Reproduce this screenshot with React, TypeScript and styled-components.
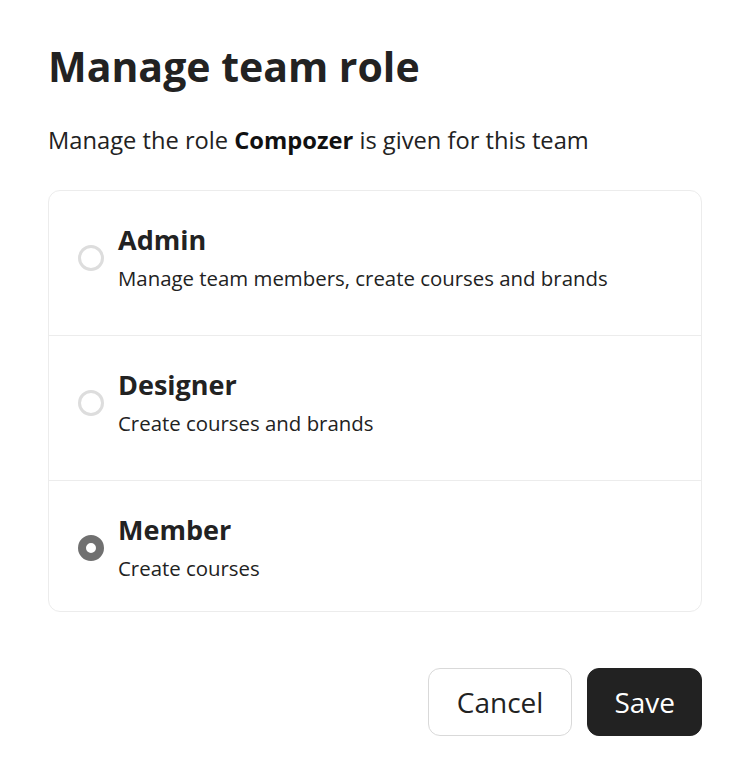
import * as React from 'react';
import styled, { createGlobalStyle } from 'styled-components';

const GlobalStyle = createGlobalStyle`
    body {
        margin: 0;
        background: #ffffff;
        font-family: "Open Sans", "Liberation Sans", sans-serif;
        color: #222222;
    }
`

const Dialog = styled.div`
    padding: 38px 44px 0 48px;
    display: flex;
    flex-direction: column;
`

const Title = styled.h1`
    margin: 0;
    font-size: 41px;
    font-weight: 700;
    line-height: 56px;
    color: #222;
`

const Subtitle = styled.p`
    margin: 30px 0 0;
    font-size: 23.7px;
    line-height: 32px;
    color: #222;
    b {
        font-weight: 700;
        color: #111;
    }
`

const Options = styled.div`
    margin-top: 34px;
    border: 1px solid #ececec;
    border-radius: 12px;
    display: flex;
    flex-direction: column;
`

const Option = styled.label<{ $last?: boolean }>`
    display: flex;
    align-items: center;
    gap: 14px;
    padding: ${p => (p.$last ? '32px 28px 28px' : '32px 28px 42px')};
    border-bottom: ${p => (p.$last ? 'none' : '1px solid #ececec')};
    cursor: pointer;
`

const Radio = styled.span<{ $checked?: boolean }>`
    width: 26px;
    height: 26px;
    box-sizing: border-box;
    border-radius: 50%;
    flex-shrink: 0;
    margin-left: 1px;
    border: ${p => (p.$checked ? '8px solid #707070' : '3px solid #dddddd')};
    background: #fff;
`

const OptionText = styled.div`
    display: flex;
    flex-direction: column;
`

const OptionTitle = styled.span`
    font-size: 27px;
    font-weight: 700;
    line-height: 34px;
    color: #222;
`

const OptionDesc = styled.span`
    font-size: 20.4px;
    line-height: 30px;
    margin-top: 6px;
    color: #222;
`

const Actions = styled.div`
    margin-top: 56px;
    display: flex;
    justify-content: flex-end;
    gap: 15px;
`

const Button = styled.button<{ $primary?: boolean }>`
    height: 68px;
    padding: ${p => (p.$primary ? '0 26px' : '0 28px')};
    border-radius: 12px;
    font-family: "Open Sans", "Liberation Sans", sans-serif;
    font-size: 28px;
    font-weight: 500;
    cursor: pointer;
    border: ${p => (p.$primary ? '1px solid #222' : '1px solid #d9d9d9')};
    background: ${p => (p.$primary ? '#222222' : '#ffffff')};
    color: ${p => (p.$primary ? '#ffffff' : '#222222')};
`

const roles = [
    { name: 'Admin', desc: 'Manage team members, create courses and brands' },
    { name: 'Designer', desc: 'Create courses and brands' },
    { name: 'Member', desc: 'Create courses' },
]

function App() {
    const [role, setRole] = React.useState('Member')

    return (
        <>
            <GlobalStyle />
            <Dialog>
                <Title>Manage team role</Title>
                <Subtitle>Manage the role <b>Compozer</b> is given for this team</Subtitle>
                <Options>
                    {roles.map((r, i) => (
                        <Option key={r.name} $last={i === roles.length - 1} onClick={() => setRole(r.name)}>
                            <Radio $checked={role === r.name} />
                            <OptionText>
                                <OptionTitle>{r.name}</OptionTitle>
                                <OptionDesc>{r.desc}</OptionDesc>
                            </OptionText>
                        </Option>
                    ))}
                </Options>
                <Actions>
                    <Button>Cancel</Button>
                    <Button $primary>Save</Button>
                </Actions>
            </Dialog>
        </>
    );
}

export default App;
